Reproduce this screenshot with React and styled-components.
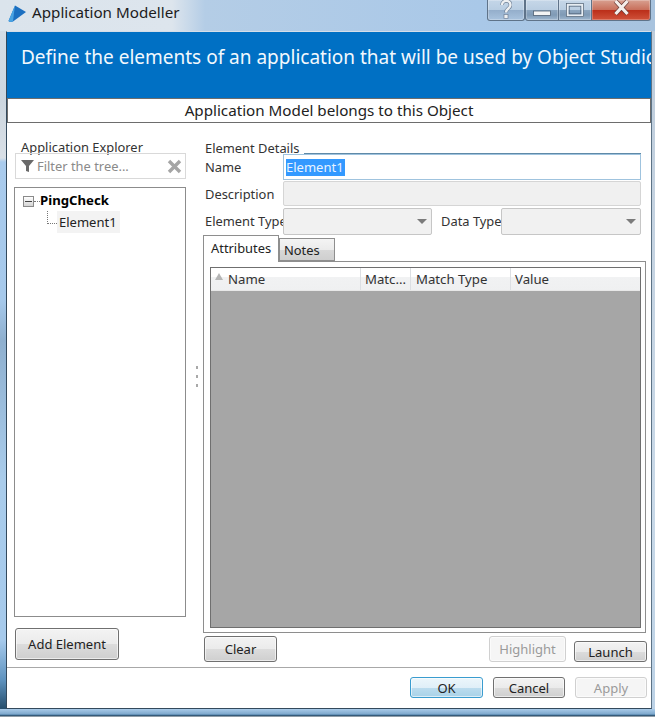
import React from 'react'
import styled, { createGlobalStyle } from 'styled-components'

const Global = createGlobalStyle`
  html, body { margin: 0; padding: 0; background: #fff; }
  * { box-sizing: border-box; }
`

const FONT = `"Noto Sans", "Open Sans", sans-serif`

const CHROME = 'linear-gradient(180deg, #c6d7e8 0, #b9cde1 50%, #8ba5bf 51%, #7f9ab5 75%, #9fb7cf 100%)'

const Frame = styled.div`
  width: 655px;
  height: 717px;
  overflow: hidden;
  display: flex;
  flex-direction: column;
  font-family: ${FONT};
  font-size: 13px;
  color: #222;
  background:
    linear-gradient(180deg, #d8e0e8 0, #ccd6df 100px, #d9e0e7 158px, #a9cbed 162px, #a6c9eb 300px, #8fb0cf 340px, #a9cceb 480px, #a6caec 640px, #5f93bf 680px, #27506f 708px) left top / 6px 100% no-repeat,
    linear-gradient(180deg, #bccbda 0, #c4d2e0 200px, #c9d9e8 500px, #bcd2e6 708px) right top / 5px 100% no-repeat,
    #b4cde6;
`

const TitleBar = styled.div`
  height: 31px;
  flex: none;
  display: flex;
  align-items: flex-start;
  background: linear-gradient(90deg, #dbe4ec 0, #dde5ed 172px, #b4cde6 205px, #a9c8e8 480px, #a8c3de 100%);
`

const AppIcon = styled.svg`
  width: 20px;
  height: 18px;
  margin: 5px 0 0 7px;
`

const Title = styled.div`
  margin: 1px 0 0 5px;
  font-size: 15.2px;
  line-height: 22px;
  color: #1c1c1c;
`

const WindowButtons = styled.div`
  margin-left: auto;
  margin-right: 4px;
  height: 21px;
  display: flex;
`

const WinBtn = styled.div`
  width: ${p => p.$w}px;
  height: 21px;
  display: flex;
  align-items: flex-start;
  justify-content: center;
  border: 1px solid #5f7389;
  border-top: 0;
  border-left-width: ${p => (p.$first ? 1 : 0)}px;
  border-radius: ${p => p.$radius || '0'};
  background: ${p => p.$bg};
  box-shadow: inset 0 0 0 1px rgba(255, 255, 255, 0.25);
`

const Client = styled.div`
  flex: none;
  height: 678px;
  margin: 0 3px 0 6px;
  background: #fff;
  border: 1px solid #33495c;
  border-top: 1px solid #d5dee8;
  border-right: 1px solid #5d7386;
  display: flex;
  flex-direction: column;
`

const Banner = styled.div`
  height: 66px;
  flex: none;
  background: #0070c4;
  color: #f2f8fd;
  font-size: 19px;
  line-height: 28px;
  padding: 11px 0 0 14px;
  white-space: nowrap;
  overflow: hidden;
`

const SubBar = styled.div`
  height: 25px;
  flex: none;
  border: 1px solid #6d6d6d;
  text-align: center;
  font-size: 15.2px;
  line-height: 23px;
  color: #222;
`

const Main = styled.div`
  flex: 1;
  display: flex;
  min-height: 0;
`

const LeftPanel = styled.div`
  width: 180px;
  flex: none;
  padding: 18px 0 0 7px;
  display: flex;
  flex-direction: column;
`

const GroupLabel = styled.div`
  font-size: 12.9px;
  line-height: 13px;
  margin-bottom: -1px;
  color: #333;
  white-space: nowrap;
  padding-left: ${p => p.$indent || 0}px;
`

const FilterBox = styled.div`
  width: 171px;
  height: 26px;
  margin: 0 0 0 1px;
  border: 1px solid #d9d9d9;
  display: flex;
  align-items: center;
  padding: 0 3px 0 4px;
  color: #8a8a8a;
  font-size: 12.9px;
`

const FilterText = styled.span`
  margin-left: 2px;
  flex: 1;
`

const TreeBox = styled.div`
  width: 172px;
  height: 430px;
  margin-top: 8px;
  border: 1px solid #8c8c8c;
  padding: 1px 0 0 8px;
`

const TreeRow = styled.div`
  display: flex;
  align-items: center;
  height: 22px;
`

const Expander = styled.div`
  width: 11px;
  height: 11px;
  margin-top: 3px;
  border: 1px solid #8a8a8a;
  background: linear-gradient(180deg, #fff, #d4d4d4);
  display: flex;
  align-items: center;
  justify-content: center;
  &::after {
    content: '';
    width: 7px;
    height: 1px;
    background: #444;
  }
`

const RootDots = styled.div`
  width: 6px;
  margin-top: 3px;
  border-top: 1px dotted #777;
`

const RootLabel = styled.div`
  font-weight: 700;
  font-size: 13.2px;
  color: #000;
`

const ChildIndent = styled.div`
  width: 10px;
  height: 13px;
  flex: none;
  align-self: flex-start;
  margin-left: 24px;
  border-left: 1px dotted #777;
  border-bottom: 1px dotted #777;
`

const ChildLabel = styled.div`
  padding: 0 3px 0 2px;
  height: 22px;
  line-height: 22px;
  background: #f3f3f3;
  font-size: 13px;
  color: #222;
`

const Splitter = styled.div`
  width: 17px;
  flex: none;
  display: flex;
  flex-direction: column;
  align-items: center;
  justify-content: center;
  gap: 6px;
  padding: 0 0 38px 2px;
`

const GripDot = styled.div`
  width: 2px;
  height: 3px;
  background: #a9a9a9;
`

const RightPanel = styled.div`
  flex: 1;
  min-width: 0;
  padding: 16px 3px 0 0;
  display: flex;
  flex-direction: column;
`

const DetailsHead = styled.div`
  display: flex;
  align-items: flex-end;
  height: 15px;
  padding-left: 1px;
`

const HeadLine = styled.div`
  flex: 1;
  border-top: 1px solid #5f8aa8;
  margin: 0 7px 0 5px;
  height: 0;
`

const FieldRow = styled.div`
  display: flex;
  align-items: center;
  height: ${p => p.$h}px;
  margin-right: 7px;
  padding-left: 1px;
`

const FieldLabel = styled.div`
  width: ${p => p.$w}px;
  flex: none;
  margin-left: ${p => p.$ml || 0}px;
  font-size: 12.9px;
  white-space: nowrap;
  color: #333;
  overflow: hidden;
`

const NameInput = styled.div`
  flex: 1;
  height: 26px;
  border: 1px solid #9fc3de;
  padding: 0 0 0 2px;
  display: flex;
  align-items: center;
  font-size: 13px;
`

const Selected = styled.span`
  background: #3399ff;
  color: #e8f3ff;
  line-height: 17px;
  padding-right: 1px;
`

const DisabledInput = styled.div`
  flex: 1;
  height: 25px;
  background: #f0f0f0;
  border: 1px solid #d5d5d5;
  border-radius: 2px;
`

const Select = styled.div`
  width: ${p => (p.$w ? `${p.$w}px` : 'auto')};
  flex: ${p => (p.$w ? 'none' : 1)};
  height: 27px;
  background: #f1f1f1;
  border: 1px solid #c6c6c6;
  border-radius: 2px;
  display: flex;
  align-items: center;
  justify-content: flex-end;
  padding-right: 4px;
  &::after {
    content: '';
    border-left: 5px solid transparent;
    border-right: 5px solid transparent;
    border-top: 5px solid #7b7b7b;
  }
`

const TabStrip = styled.div`
  display: flex;
  align-items: flex-end;
  height: 26px;
  margin-left: -1px;
  position: relative;
  z-index: 1;
`

const Tab = styled.div`
  height: ${p => (p.$active ? 27 : 23)}px;
  width: ${p => p.$w}px;
  border: 1px solid #8e8e8e;
  border-bottom: ${p => (p.$active ? '0' : '1px solid #8e8e8e')};
  background: ${p => (p.$active ? '#fff' : 'linear-gradient(180deg, #f4f4f4 0, #ebebeb 50%, #d8d8d8 51%, #cfcfcf 100%)')};
  margin-bottom: ${p => (p.$active ? -1 : 0)}px;
  padding-left: ${p => (p.$active ? 7 : 4)}px;
  font-size: 12.9px;
  line-height: ${p => (p.$active ? 24 : 22)}px;
  color: #222;
`

const TabPanel = styled.div`
  width: 443px;
  height: 372px;
  margin-left: -1px;
  border: 1px solid #8e8e8e;
  padding: 5px 4px 4px 6px;
`

const Grid = styled.div`
  height: 100%;
  border: 1px solid #6f6f6f;
  display: flex;
  flex-direction: column;
  background: #a6a6a6;
`

const GridHead = styled.div`
  height: 23px;
  flex: none;
  display: flex;
  background: linear-gradient(180deg, #fff 0, #fff 40%, #f1f2f3 41%, #eff0f1 100%);
  border-bottom: 1px solid #e8e8e8;
`

const HeadCell = styled.div`
  width: ${p => (p.$w ? `${p.$w}px` : 'auto')};
  flex: ${p => (p.$w ? 'none' : 1)};
  border-right: ${p => (p.$w ? '1px solid #dcdfe3' : 0)};
  padding-left: ${p => p.$pad}px;
  display: flex;
  align-items: center;
  font-size: 13.2px;
  color: #333;
  white-space: nowrap;
`

const SortArrow = styled.div`
  border-left: 4px solid transparent;
  border-right: 4px solid transparent;
  border-bottom: 7px solid #b5b5b5;
  margin-right: 5px;
  margin-top: -5px;
`

const ActionRow = styled.div`
  display: flex;
  align-items: flex-end;
  height: 29px;
`

const Button = styled.div`
  width: ${p => p.$w}px;
  height: ${p => p.$h}px;
  flex: none;
  margin-left: ${p => p.$ml || 0}px;
  margin-top: ${p => p.$mt || 0}px;
  border: 1px solid ${p => (p.$disabled ? '#d0d0d0' : p.$focus ? '#3a9ccf' : '#707070')};
  border-radius: 3px;
  display: flex;
  align-items: center;
  justify-content: center;
  font-size: 13px;
  color: ${p => (p.$disabled ? '#9a9a9a' : '#222')};
  background: ${p => (p.$disabled ? '#f5f5f5'
    : p.$focus ? 'linear-gradient(180deg, #ecf6fb 0, #e0eff8 50%, #bcdcee 51%, #a9d2e8 100%)'
    : 'linear-gradient(180deg, #f3f3f3 0, #ebebeb 50%, #dcdcdc 51%, #cfcfcf 100%)')};
  box-shadow: inset 0 0 0 1px rgba(255, 255, 255, 0.6);
`

const Footer = styled.div`
  height: 41px;
  flex: none;
  border-top: 1px solid #a8a8a8;
  display: flex;
  align-items: flex-start;
  justify-content: flex-end;
  gap: 10px;
  padding: 9px 4px 0 0;
`

const Desktop = styled.div`
  flex: 1;
  background: linear-gradient(180deg, #a9cbe9 0, #7fa9cd 5px, #4b7ca4 6px, #1f3a50 7px, #fff 8px);
`

export default function App() {
  return (
    <Frame>
      <Global />
      <TitleBar>
        <AppIcon viewBox="0 0 20 18">
          <path d="M8 0.5 L19 7 L6 16.5 Q3 17.5 1.5 16 Z" fill="#1b6fc0" />
          <path d="M8 0.5 L1.5 16 Q3 17.5 6 16.5 L7 8 Z" fill="#48a2e2" />
        </AppIcon>
        <Title>Application Modeller</Title>
        <WindowButtons>
          <WinBtn $w={38} $first $radius="0 0 3px 3px" $bg="linear-gradient(180deg, #c4d6e8 0, #b8cde2 50%, #94aecb 51%, #a9c3de 100%)">
            <svg width="12" height="19" viewBox="0 0 12 19">
              <path d="M2 5 C2 -0.5 10.5 -0.5 10.5 5 C10.5 8.5 6 8.5 6 12.5" fill="none" stroke="#6f8197" strokeWidth="3.6" />
              <path d="M2 5 C2 -0.5 10.5 -0.5 10.5 5 C10.5 8.5 6 8.5 6 12.5" fill="none" stroke="#eef0f2" strokeWidth="2.4" />
              <rect x="4" y="14.5" width="4" height="4" fill="#eef0f2" stroke="#6f8197" strokeWidth="0.7" />
            </svg>
          </WinBtn>
          <WinBtn $w={34} $first $radius="0 0 0 3px" $bg={CHROME}>
            <svg width="18" height="17" viewBox="0 0 18 17">
              <rect x="0.5" y="11" width="17" height="4.5" fill="#f4f4f4" stroke="#4f6073" strokeWidth="0.8" />
            </svg>
          </WinBtn>
          <WinBtn $w={33} $bg={CHROME}>
            <svg width="18" height="17" viewBox="0 0 18 17" style={{ marginTop: 3 }}>
              <rect x="1.5" y="1.5" width="15" height="11" fill="none" stroke="#e8edf2" strokeWidth="2.2" />
              <rect x="0.5" y="0.5" width="17" height="13" fill="none" stroke="#4f6073" strokeWidth="0.7" />
              <rect x="3.2" y="3.2" width="11.6" height="7.6" fill="none" stroke="#4f6073" strokeWidth="0.7" />
            </svg>
          </WinBtn>
          <WinBtn $w={59} $radius="0 0 3px 0" $bg="linear-gradient(180deg, #d8a090 0, #c9705c 48%, #bb2f1a 52%, #d0523a 100%)">
            <svg width="17" height="17" viewBox="0 0 17 17">
              <path d="M2.5 1 L14.5 14 M14.5 1 L2.5 14" stroke="#6a3b35" strokeWidth="4.6" />
              <path d="M2.5 1 L14.5 14 M14.5 1 L2.5 14" stroke="#f5eeea" strokeWidth="3.2" />
            </svg>
          </WinBtn>
        </WindowButtons>
      </TitleBar>

      <Client>
        <Banner>Define the elements of an application that will be used by Object Studio</Banner>
        <SubBar>Application Model belongs to this Object</SubBar>

        <Main>
          <LeftPanel>
            <GroupLabel $indent={7}>Application Explorer</GroupLabel>
            <FilterBox>
              <svg width="15" height="14" viewBox="0 0 15 14">
                <path d="M1 1 H14 L9 7 V13 L6 12 V7 Z" fill="#6a6a6a" />
              </svg>
              <FilterText>Filter the tree...</FilterText>
              <svg width="15" height="15" viewBox="0 0 15 15">
                <path d="M2 2 L13 13 M13 2 L2 13" stroke="#a5a5a5" strokeWidth="3.4" />
              </svg>
            </FilterBox>
            <TreeBox>
              <TreeRow>
                <Expander />
                <RootDots />
                <RootLabel>PingCheck</RootLabel>
              </TreeRow>
              <TreeRow>
                <ChildIndent />
                <ChildLabel>Element1</ChildLabel>
              </TreeRow>
            </TreeBox>
            <Button $w={104} $h={32} $ml={1} $mt={11}>Add Element</Button>
          </LeftPanel>

          <Splitter>
            <GripDot />
            <GripDot />
            <GripDot />
          </Splitter>

          <RightPanel>
            <DetailsHead>
              <GroupLabel>Element Details</GroupLabel>
              <HeadLine />
            </DetailsHead>
            <FieldRow $h={26}>
              <FieldLabel $w={78}>Name</FieldLabel>
              <NameInput><Selected>Element1</Selected></NameInput>
            </FieldRow>
            <FieldRow $h={27}>
              <FieldLabel $w={78}>Description</FieldLabel>
              <DisabledInput />
            </FieldRow>
            <FieldRow $h={28}>
              <FieldLabel $w={78}>Element Type</FieldLabel>
              <Select $w={149} />
              <FieldLabel $w={60} $ml={9}>Data Type</FieldLabel>
              <Select />
            </FieldRow>
            <TabStrip>
              <Tab $active $w={76}>Attributes</Tab>
              <Tab $w={56}>Notes</Tab>
            </TabStrip>
            <TabPanel>
              <Grid>
                <GridHead>
                  <HeadCell $w={150} $pad={4}><SortArrow />Name</HeadCell>
                  <HeadCell $w={50} $pad={4}>Matc...</HeadCell>
                  <HeadCell $w={100} $pad={5}>Match Type</HeadCell>
                  <HeadCell $pad={4}>Value</HeadCell>
                </GridHead>
              </Grid>
            </TabPanel>
            <ActionRow>
              <Button $w={73} $h={26}>Clear</Button>
              <Button $w={77} $h={26} $ml={212} $disabled>Highlight</Button>
              <Button $w={73} $h={21} $ml={8}>Launch</Button>
            </ActionRow>
          </RightPanel>
        </Main>

        <Footer>
          <Button $w={73} $h={21} $focus>OK</Button>
          <Button $w={72} $h={21}>Cancel</Button>
          <Button $w={72} $h={21} $disabled>Apply</Button>
        </Footer>
      </Client>
      <Desktop />
    </Frame>
  )
}
